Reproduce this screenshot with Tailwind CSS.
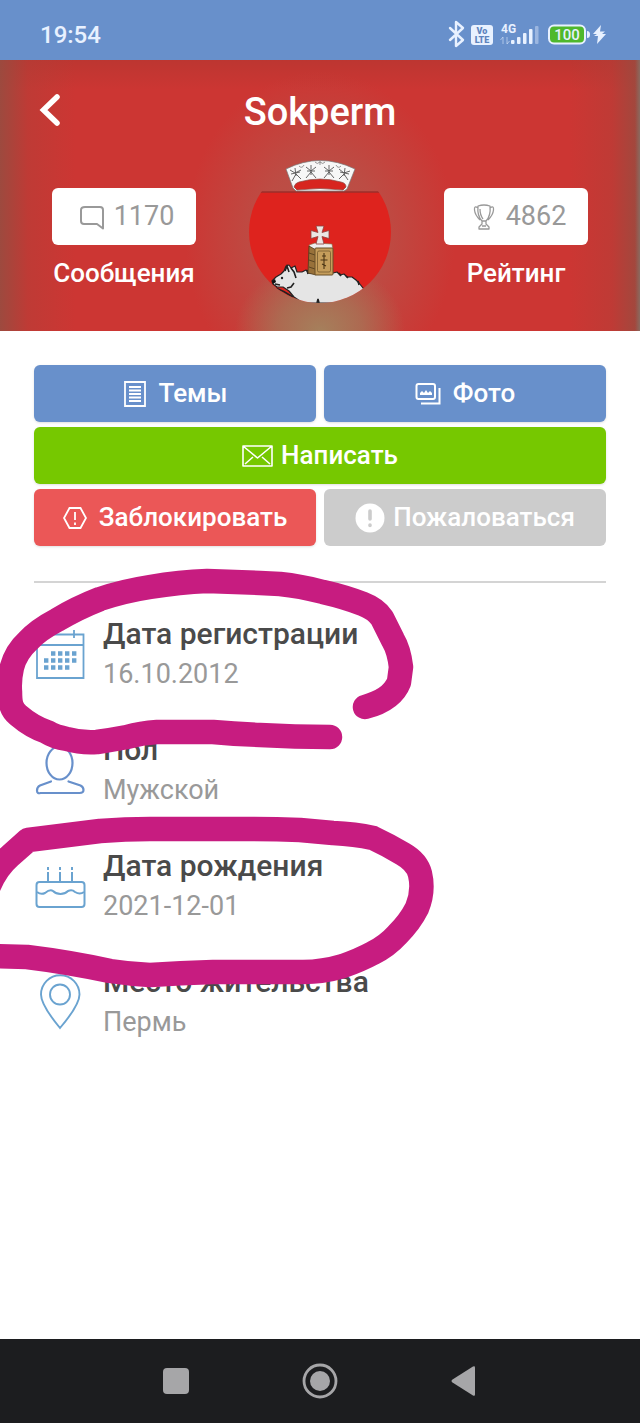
<!DOCTYPE html>
<html lang="ru">
<head>
  <meta charset="UTF-8" />
  <meta name="viewport" content="width=device-width, initial-scale=1.0" />
  <title>Sokperm</title>
  <script src="https://cdn.jsdelivr.net/npm/@tailwindcss/browser@4"></script>
  <style>
    body {
      font-family: Roboto, 'Liberation Sans', sans-serif;
    }
    .cover {
      background-color: #cc3633;
      background-image:
        linear-gradient(to left, #8a6a60 0, rgba(138, 80, 65, 0) 5px),
        linear-gradient(to right, rgba(152, 76, 64, 0.9) 0, rgba(175, 64, 56, 0.45) 28px, rgba(204, 54, 51, 0) 75px),
        linear-gradient(to left, rgba(152, 76, 64, 0.9) 0, rgba(175, 64, 56, 0.45) 28px, rgba(204, 54, 51, 0) 70px),
        linear-gradient(to bottom, rgba(170, 54, 46, 0.45) 0, rgba(204, 54, 51, 0) 30px),
        radial-gradient(ellipse 85px 70px at 50% 100%, rgba(165, 128, 92, 1) 0, rgba(165, 120, 88, 0.7) 50%, rgba(180, 90, 75, 0) 100%),
        radial-gradient(ellipse 135px 165px at 50% 65%, rgba(182, 84, 74, 1) 0, rgba(186, 80, 71, 0.85) 45%, rgba(204, 54, 51, 0) 100%);
    }
  </style>
</head>
<body class="bg-white">
  <div class="min-h-screen flex flex-col overflow-hidden">

    <!-- Status bar -->
    <div class="h-[60px] shrink-0 bg-[#6890cb] flex items-center justify-between pl-10 pr-8 pt-2.5 text-[#e8f1ff]">
      <span class="text-2xl font-medium">19:54</span>
      <svg class="w-40 h-[30px]" viewBox="448 20 160 30" fill="currentColor">
        <path d="M450 28l13 12-7 6V22l7 6-13 12" fill="none" stroke="currentColor" stroke-width="2.4" stroke-linejoin="round" stroke-linecap="round" />
        <rect x="471" y="25" width="22" height="20" rx="3" />
        <text x="482" y="34" text-anchor="middle" font-size="9" font-weight="900" fill="#5d83bd">Vo</text>
        <text x="482" y="43" text-anchor="middle" font-size="9" font-weight="900" fill="#5d83bd">LTE</text>
        <text x="501" y="33" font-size="12" font-weight="700">4G</text>
        <path d="M503 44v-7M500.500 40l2.500-3M507 37v7M509.500 41l-2.500 3" stroke="currentColor" opacity=".55" fill="none" />
        <rect x="511" y="40" width="3.500" height="4" rx="1" />
        <rect x="517" y="37" width="3.500" height="7" rx="1" />
        <rect x="523" y="33" width="3.500" height="11" rx="1" />
        <rect x="529" y="29" width="3.500" height="15" rx="1" />
        <rect x="535" y="26" width="3.500" height="18" rx="1" opacity=".4" />
        <rect x="549" y="25.500" width="36" height="18" rx="5" fill="#4fb82c" stroke="currentColor" stroke-width="2" />
        <text x="567" y="40" text-anchor="middle" font-size="15" font-weight="500">100</text>
        <path d="M587 31q3 0 3 3.500t-3 3.500z" />
        <path d="M601 25l-8 9h4l-3 2h4l-1 8 9-10h-4l3-2.500h-5z" />
      </svg>
    </div>

    <!-- Profile header -->
    <header class="cover h-[271px] shrink-0 text-white">
      <div class="relative h-[100px] pt-1 flex items-center justify-center">
        <button type="button" aria-label="Назад" class="absolute left-9 top-8 p-0">
          <svg class="w-7 h-9" viewBox="0 0 28 36" fill="none" stroke="currentColor" stroke-width="5.5" stroke-linecap="round" stroke-linejoin="miter"><path d="M21 5L7.500 18 21 31" /></svg>
        </button>
        <h1 class="text-[38px] leading-[44px] font-medium">Sokperm</h1>
      </div>
      <div class="flex justify-between px-[52px]">
        <div class="w-36 pt-7 flex flex-col items-center">
          <button type="button" class="w-full h-[57px] rounded-md bg-white text-[#999] text-[27px] flex items-center justify-center gap-2 pl-1">
            <svg class="w-7 h-7" viewBox="0 0 28 28" fill="none" stroke="currentColor" stroke-width="2" stroke-linejoin="round"><path d="M7 4h15q3 0 3 3v18.500L19 21H6q-3 0-3-3V7q0-3 4-3z" /></svg>
            <span>1170</span>
          </button>
          <span class="text-[26px] leading-9 mt-2.5 font-medium">Сообщения</span>
        </div>
        <svg class="w-[142px] h-[143px]" viewBox="0 0 142 143" role="img" aria-label="Аватар">
          <defs><clipPath id="round"><circle cx="71" cy="72" r="71" /></clipPath></defs>
          <g clip-path="url(#round)">
            <rect y="32" width="142" height="111" fill="#de231e" />
            <path d="M12 32h118" stroke="#9b2f2b" stroke-width="1.500" />
            <!-- bear -->
            <path d="M23 121L27 117 32 114 35 111 37 106 40 105 42 108 46 106 48 112 53 112 57 110 60 113 84 113 88 112 91 115 95 114 98 117 103 117 107 120 110 123 114 128 124 143H54L45 137 40 131 34 127 28 127 24 124z" fill="#e5e5e5" stroke="#222" stroke-width="1.200" stroke-linejoin="round" />
            <path d="M36 111l2-5 2 6M42 108l3 4 2 6M38 128l4-1 3-4M26 124l5 1M27 128q8 3 17 9M68 143l1-4 1 4M58 110l1 4M90 113l2 3M97 116l2 2M109 121l1 4" fill="none" stroke="#222" stroke-width="1.600" />
            <path d="M23 121l3-2 1 3-3 2z" fill="#111" />
            <circle cx="33" cy="118" r="1.200" fill="#222" />
            <!-- book -->
            <path d="M60 85l6-2 17 1 1 6H61z" fill="#eee" stroke="#876b3f" stroke-width=".6" />
            <path d="M60 86l7 4v25l-8-2z" fill="#98713a" stroke="#4e3a1b" stroke-width=".8" />
            <path d="M60 93l6 2M60 100l6 2M60 107l6 2" stroke="#4e3a1b" stroke-width=".8" />
            <rect x="66" y="88" width="18" height="27" rx="1" fill="#c59d5b" stroke="#6b5128" />
            <rect x="68.500" y="91" width="13" height="21" rx="1.500" fill="none" stroke="#6b5128" stroke-width=".7" />
            <path d="M75 93v16M73 96h4M71.500 100h7M73 104l4 2" stroke="#4a3414" stroke-width="1.100" />
            <!-- cross -->
            <path d="M67 66h8l-2 6.500 7-2v8l-7-2 2 7.500h-8l2-7.500-7 2v-8l7 2z" fill="#ebe6e4" stroke="#8e4340" stroke-width=".8" />
          </g>
          <!-- crown -->
          <path d="M37 9Q71-8 106 9l-8 20-3 2H47l-3-3z" fill="#f7f7f7" stroke="#777" stroke-width=".7" />
          <path d="M45 27q1-4 5-5 21-6 42 0 5 1 5 5l-3 3q-23-3-46 0z" fill="#d7251f" stroke="#8a4a45" stroke-width=".7" />
          <g fill="none" stroke="#555" stroke-width=".9">
            <path d="M46 8l1 8M41 10l5 3 6-3M43 21l4-7 5 5M42 14l9-2" />
            <path d="M62 5v10M57 7l5 4 5-4M57 18l5-6 5 6M58 11h8" />
            <path d="M80 5v10M75 7l5 4 5-4M75 18l5-6 5 6M76 11h8" />
            <path d="M96 8l-1 8M90 9l5 4 6-2M90 19l5-5 4 6M91 12l9 2" />
            <path d="M66 2q2 3 5 0 3 3 5 0M71 1v4M50 6q3 3 5-1M87 5q2 4 5 1" stroke="#888" />
          </g>
        </svg>
        <div class="w-36 pt-7 flex flex-col items-center">
          <button type="button" class="w-full h-[57px] rounded-md bg-white text-[#999] text-[27px] flex items-center justify-center gap-2 pl-1">
            <svg class="w-7 h-7" viewBox="0 0 28 28" fill="none" stroke="currentColor" stroke-width="1.300" stroke-linejoin="round"><path d="M8 3q6-2 12 0 1 10-4 15v3l3 3v2H9v-2l3-3v-3Q7 13 8 3zM8 5Q4 2 4.500 7 5 12 10 17M20 5q4-3 3.500 2-.500 5-5.500 10M10 6q0 6 3 10M12 18h4M12 23h4" /></svg>
            <span>4862</span>
          </button>
          <span class="text-[26px] leading-9 mt-2.5 font-medium">Рейтинг</span>
        </div>
      </div>
    </header>

    <main class="relative grow px-[34px] pt-[34px]">
      <!-- Actions -->
      <div class="grid grid-cols-2 gap-x-2 gap-y-[5px] text-[26px] font-medium text-white">
        <button type="button" class="h-[57px] rounded-md bg-[#6890cb] shadow-sm flex items-center justify-center gap-3">
          <svg class="w-6 h-7" viewBox="0 0 24 28" fill="none" stroke="currentColor" stroke-width="1.800"><path d="M2 2h20v24H2zM6 7h12M6 10.500h12M6 14h12M6 17.500h12M6 21h12" /></svg>
          Темы
        </button>
        <button type="button" class="h-[57px] rounded-md bg-[#6890cb] shadow-sm flex items-center justify-center gap-3">
          <svg class="w-[26px] h-6" viewBox="0 0 26 24" fill="none" stroke="currentColor" stroke-width="2"><rect x="1.500" y="2" width="18.500" height="15" rx="2" /><path d="M24.500 6v15.500H6" /><path d="M5 13v-2l2-2 2 2 2-3 2 3 2-2 2 2v2z" fill="currentColor" stroke="none" /></svg>
          Фото
        </button>
        <button type="button" class="col-span-2 h-[57px] rounded-md bg-[#76c800] shadow-sm flex items-center justify-center gap-2">
          <svg class="w-[31px] h-6" viewBox="0 0 31 24" fill="none" stroke="currentColor" stroke-width="1.600" stroke-linejoin="round"><path d="M1 2h29v20H1zM1 2l14.500 12L30 2M3 20l8-7M28 20l-8-7" /></svg>
          Написать
        </button>
        <button type="button" class="h-[57px] rounded-md bg-[#eb5757] shadow-sm flex items-center justify-center gap-3">
          <svg class="w-6 h-6" viewBox="0 0 24 24" fill="none" stroke="currentColor" stroke-width="1.800"><path d="M6.500 2h11L23 12l-5.500 10h-11L1 12zM12 6v8M12 16.500v2.500" /></svg>
          Заблокировать
        </button>
        <button type="button" class="h-[57px] rounded-md bg-[#ccc] flex items-center justify-center gap-2">
          <svg class="w-[30px] h-[30px]" viewBox="0 0 30 30"><circle cx="15" cy="15" r="14.500" fill="#fff" /><path d="M15 8v8M15 22v.500" stroke="#ccc" stroke-width="3.600" stroke-linecap="round" /></svg>
          Пожаловаться
        </button>
      </div>

      <hr class="mt-[35px] border-t-2 border-[#d4d4d4]" />

      <!-- Profile details -->
      <dl class="mt-[30px] flex flex-col gap-[34px] text-[27px] leading-[41px] text-[#999]">
        <div class="grid grid-cols-[53px_1fr] gap-x-4">
          <svg class="row-span-2 self-center w-[53px] h-14" viewBox="0 0 53 56" fill="none" stroke="#6aa3d0" stroke-width="1.800">
            <path d="M3 8.500h46.500V52H3zM3 19h46.500M12.500 4v8M40 4v8" />
            <path d="M17 27.500h26M10 34.500h33M10 41.500h26" stroke-width="4.400" stroke-dasharray="4.400 2.600" />
          </svg>
          <dt class="text-[30px] font-medium text-[#4a4a4a]">Дата регистрации</dt>
          <dd>16.10.2012</dd>
        </div>
        <div class="grid grid-cols-[53px_1fr] gap-x-4">
          <svg class="row-span-2 self-center w-[53px] h-14" viewBox="0 0 53 56" fill="none" stroke="#6890cb" stroke-width="2.200" stroke-linecap="round">
            <ellipse cx="25.500" cy="21" rx="13" ry="16.500" />
            <path d="M17 39.500L6 43.500q-3 1.500-3 5T6.500 51h39q4 0 4-3t-3-4.500L34.500 39.500" />
          </svg>
          <dt class="text-[30px] font-medium text-[#4a4a4a]">Пол</dt>
          <dd>Мужской</dd>
        </div>
        <div class="grid grid-cols-[53px_1fr] gap-x-4">
          <svg class="row-span-2 self-center w-[53px] h-14" viewBox="0 0 53 56" fill="none" stroke="#6aa3d0" stroke-width="2">
            <rect x="2.500" y="24" width="48" height="25" rx="3" />
            <path d="M3 34q4 3 8 1 5-4 8-2 3 3 7.500 3t7.500-3q4-2 7 1 5 3 9 0" />
            <path d="M14 9v3M14 14v9M26 9v3M26 14v9M38 9v3M38 14v9" />
          </svg>
          <dt class="text-[30px] font-medium text-[#4a4a4a]">Дата рождения</dt>
          <dd>2021-12-01</dd>
        </div>
        <div class="grid grid-cols-[53px_1fr] gap-x-4">
          <svg class="row-span-2 self-center w-[53px] h-14" viewBox="0 0 53 56" fill="none" stroke="#6aa3d0" stroke-width="1.900">
            <path d="M26 54Q7 31 7 20.500a19 19 0 0 1 38.500 0Q45.500 31 26 54z" />
            <circle cx="26" cy="20.500" r="10" />
          </svg>
          <dt class="text-[30px] font-medium text-[#4a4a4a]">Место жительства</dt>
          <dd>Пермь</dd>
        </div>
      </dl>

      <!-- Marker strokes over the list -->
      <svg class="absolute left-0 top-0 w-[450px] h-[700px] pointer-events-none" viewBox="0 331 450 700" fill="none" stroke="#c71c80" stroke-width="24.500" stroke-linecap="round" stroke-linejoin="round">
        <path d="M365 707C380 703 394 695 399 682L401 667Q399 650 393 640Q387 628 382 618Q376 609 363 604Q345 597 323 592Q300 586 280 584L260 583L207 581Q180 582 150 587Q124 591 100 599Q77 608 57 620Q38 630 28 641Q16 652 12 667Q9 680 10 692C10 703 11 709 18 715Q32 727 47 732Q55 737 67 739Q81 743 97 742Q111 740 127 737Q141 733 157 732H213Q235 734 260 735Q295 737 330 737" />
        <path d="M-12 888Q-4 868 10 856L28 840L100 831Q125 829 150 829H240Q270 829 300 830L333 833Q355 834 373 838Q388 845 403 854Q417 862 420 874Q424 891 417 908Q410 922 397 935Q387 946 373 953Q360 960 343 966Q323 972 303 972H213Q180 973 150 975Q130 974 110 971Q68 962 27 957L-10 956" />
      </svg>
    </main>

    <!-- System navigation -->
    <nav class="h-21 shrink-0 bg-[#1c1d1f] flex items-center justify-center gap-[108px] text-[#a6a6a8]">
      <button type="button" aria-label="Недавние">
        <svg class="w-9 h-9" viewBox="0 0 36 36" fill="currentColor"><rect x="5" y="5" width="26" height="26" rx="4" /></svg>
      </button>
      <button type="button" aria-label="Домой">
        <svg class="w-9 h-9" viewBox="0 0 36 36" fill="currentColor"><circle cx="18" cy="18" r="16" fill="none" stroke="currentColor" stroke-width="2.800" /><circle cx="18" cy="18" r="10" /></svg>
      </button>
      <button type="button" aria-label="Назад">
        <svg class="w-9 h-9" viewBox="0 0 36 36" fill="currentColor"><path d="M29 4.500v27q0 2-2 1L6.500 19.500q-2-1.500 0-3L27 3.500q2-1 2 1z" /></svg>
      </button>
    </nav>
  </div>
</body>
</html>
